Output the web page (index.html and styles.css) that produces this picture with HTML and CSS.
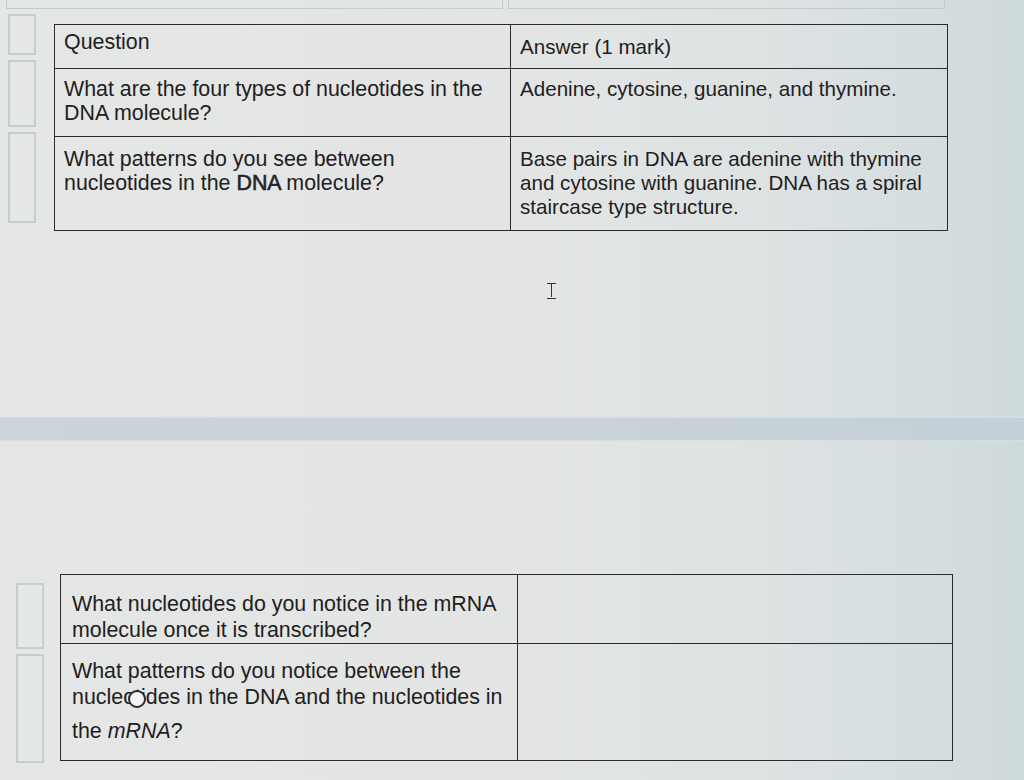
FILE: index.html
```html
<!DOCTYPE html>
<html>
<head>
<meta charset="utf-8">
<link rel="stylesheet" href="styles.css">
</head>
<body>
<div class="page">
  <div class="top-strip">
    <div class="ghost ghost-a"></div>
    <div class="ghost ghost-b"></div>
  </div>

  <div class="section s1">
    <div class="handles h1">
      <div class="handle" style="height:41px"></div>
      <div class="handle" style="height:67px"></div>
      <div class="handle" style="height:91px"></div>
    </div>
    <table class="qa t1">
      <tr class="r-head">
        <td class="c-q">Question</td>
        <td class="c-a">Answer (1 mark)</td>
      </tr>
      <tr class="r-2">
        <td class="c-q">What are the four types of nucleotides in the DNA molecule?</td>
        <td class="c-a">Adenine, cytosine, guanine, and thymine.</td>
      </tr>
      <tr class="r-3">
        <td class="c-q">What patterns do you see between<br>nucleotides in the <span class="semi">DNA</span> molecule?</td>
        <td class="c-a">Base pairs in DNA are adenine with thymine and cytosine with guanine. DNA has a spiral staircase type structure.</td>
      </tr>
    </table>
  </div>

  <div class="band"></div>

  <div class="section s2">
    <div class="handles h2">
      <div class="handle" style="height:66px"></div>
      <div class="handle" style="height:109px"></div>
    </div>
    <table class="qa t2">
      <tr class="r-b1">
        <td class="c-q">What nucleotides do you notice in the mRNA molecule once it is transcribed?</td>
        <td class="c-a"></td>
      </tr>
      <tr class="r-b2">
        <td class="c-q">What patterns do you notice between the<br><span class="cur-host">nucleotides<span class="ring"></span></span> in the DNA and the nucleotides in<br><span class="last">the <i>mRNA</i>?</span></td>
        <td class="c-a"></td>
      </tr>
    </table>
  </div>

  <div class="ibeam"></div>
</div>
</body>
</html>
```

FILE: styles.css
```css
* { box-sizing: border-box; }

html, body {
  margin: 0;
  padding: 0;
}

body {
  width: 1024px;
  height: 780px;
  overflow: hidden;
  font-family: "Liberation Sans", Arial, sans-serif;
  color: #1f2020;
  background: linear-gradient(90deg, #e5e6e6 0%, #e3e5e5 55%, #dbe1e2 80%, #cfdadd 100%);
}

.page {
  position: relative;
  width: 1024px;
  height: 780px;
}

.top-strip {
  display: flex;
  height: 9px;
  padding-left: 6px;
  gap: 5px;
}

.ghost {
  height: 9px;
  border: 1px solid #c5c9c9;
  border-top: none;
}

.ghost-a { width: 497px; }
.ghost-b { width: 437px; }

.section {
  display: flex;
  align-items: flex-start;
}

.s1 {
  padding-left: 8px;
  gap: 18px;
}

.s2 {
  margin-top: 133px;
  padding-left: 16px;
  gap: 16px;
}

.handles {
  display: flex;
  flex-direction: column;
  width: 28px;
}

.h1 { margin-top: 5px; gap: 5px; }
.h2 { margin-top: 9px; gap: 5px; }

.handle {
  width: 28px;
  border: 2px solid #c9cccc;
  background: #e6e7e7;
}

.qa {
  border-collapse: collapse;
  font-size: 21.4px;
  line-height: 24px;
  table-layout: fixed;
}

.qa td {
  border: 1.5px solid #2a2b2c;
  vertical-align: top;
  padding: 8px 9px 0 9px;
}

.t1 {
  margin-top: 15px;
  width: 894px;
}

.t1 .c-q { width: 456px; }
.t1 .c-a { font-size: 20.6px; }

.t1 .r-head td { height: 44px; padding-top: 5px; }
.t1 .r-head .c-a { padding-top: 10px; }
.t1 .r-2 td { height: 68px; padding-top: 8px; }
.t1 .r-3 td { height: 94px; padding-top: 10px; }

.semi {
  -webkit-text-stroke: 0.6px #2b2c2d;
}

.band {
  margin-top: 186px;
  height: 24px;
  background: linear-gradient(90deg, #cbd4da 0%, #c8d2d8 60%, #c3d0d7 100%);
  border-top: 1px solid #d7dde0;
  border-bottom: 1px solid #d9dfe1;
}

.t2 {
  width: 893px;
  line-height: 26px;
}

.t2 .c-q { width: 457px; padding-left: 11px; }

.t2 .r-b1 td { height: 66px; padding-top: 16px; }
.t2 .r-b2 td { height: 117px; padding-top: 14px; }

.last {
  display: inline-block;
  margin-top: 8px;
}

.cur-host {
  position: relative;
}

.ring {
  position: absolute;
  left: 56px;
  top: 5px;
  width: 18px;
  height: 18px;
  border: 2.5px solid #2a2a2a;
  border-radius: 50%;
  background: #f4f5f5;
}

.ibeam {
  position: absolute;
  left: 547px;
  top: 283px;
  width: 9px;
  height: 16px;
  border-top: 1.5px solid #333;
  border-bottom: 1.5px solid #333;
}

.ibeam::before {
  content: "";
  position: absolute;
  left: 3.5px;
  top: 0;
  width: 1.5px;
  height: 13px;
  background: #333;
}
```
